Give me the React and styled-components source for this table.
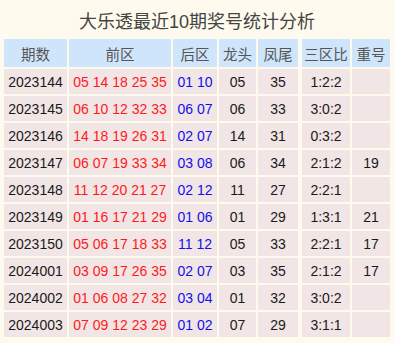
import styled, { createGlobalStyle } from 'styled-components';

const GlobalStyle = createGlobalStyle`
  body {
    margin: 0;
    background: #fefaee;
    font-family: "Liberation Sans", Arial, "Noto Sans CJK SC", sans-serif;
  }
`

const rows = [
  ['2023144', '05 14 18 25 35', '01 10', '05', '35', '1:2:2', ''],
  ['2023145', '06 10 12 32 33', '06 07', '06', '33', '3:0:2', ''],
  ['2023146', '14 18 19 26 31', '02 07', '14', '31', '0:3:2', ''],
  ['2023147', '06 07 19 33 34', '03 08', '06', '34', '2:1:2', '19'],
  ['2023148', '11 12 20 21 27', '02 12', '11', '27', '2:2:1', ''],
  ['2023149', '01 16 17 21 29', '01 06', '01', '29', '1:3:1', '21'],
  ['2023150', '05 06 17 18 33', '11 12', '05', '33', '2:2:1', '17'],
  ['2024001', '03 09 17 26 35', '02 07', '03', '35', '2:1:2', '17'],
  ['2024002', '01 06 08 27 32', '03 04', '01', '32', '3:0:2', ''],
  ['2024003', '07 09 12 23 29', '01 02', '07', '29', '3:1:1', ''],
];

const heads = ['期数', '前区', '后区', '龙头', '凤尾', '三区比', '重号'];

export default function App() {
  return (
    <Page>
      <GlobalStyle />
      <Title>大乐透最近10期奖号统计分析</Title>
      <Grid>
        {heads.map((h, i) => (
          <HeadCell key={h} split={i === 4}>{h}</HeadCell>
        ))}
        {rows.map(r => r.map((v, i) => (
          <Cell key={r[0] + i} split={i === 4} tone={i === 1 ? 'red' : i === 2 ? 'blue' : 'dark'}>
            {v}
          </Cell>
        )))}
      </Grid>
    </Page>
  )
}

const Page = styled.div`
  width: 394px;
  height: 343px;
  padding: 0 4px;
  box-sizing: border-box;
`

const Title = styled.div`
  height: 39px;
  display: flex;
  align-items: center;
  justify-content: center;
  font-family: "Liberation Sans", "Noto Sans CJK SC", sans-serif;
  font-size: 18px;
  color: #444;
  padding-top: 1px;
  box-sizing: border-box;
`

const Grid = styled.div`
  display: grid;
  grid-template-columns: 63px 102px 44px 37px 42px 48px 38px;
  grid-template-rows: 28px;
  grid-auto-rows: 25px;
  gap: 2px;
`

const HeadCell = styled.div`
  background: #cfe5fb;
  color: #555;
  font-family: "Noto Sans CJK SC", sans-serif;
  font-size: 14.5px;
  display: flex;
  align-items: center;
  justify-content: center;
  margin-right: ${p => (p.split ? '2px' : '0')};
`

const toneColor = { red: '#ff1a1a', blue: '#1010ee', dark: '#1a1a1a' };

const Cell = styled.div`
  background: #f1e5e5;
  color: ${p => toneColor[p.tone]};
  font-size: 14px;
  display: flex;
  align-items: center;
  justify-content: center;
  white-space: pre;
  margin-right: ${p => (p.split ? '2px' : '0')};
`
